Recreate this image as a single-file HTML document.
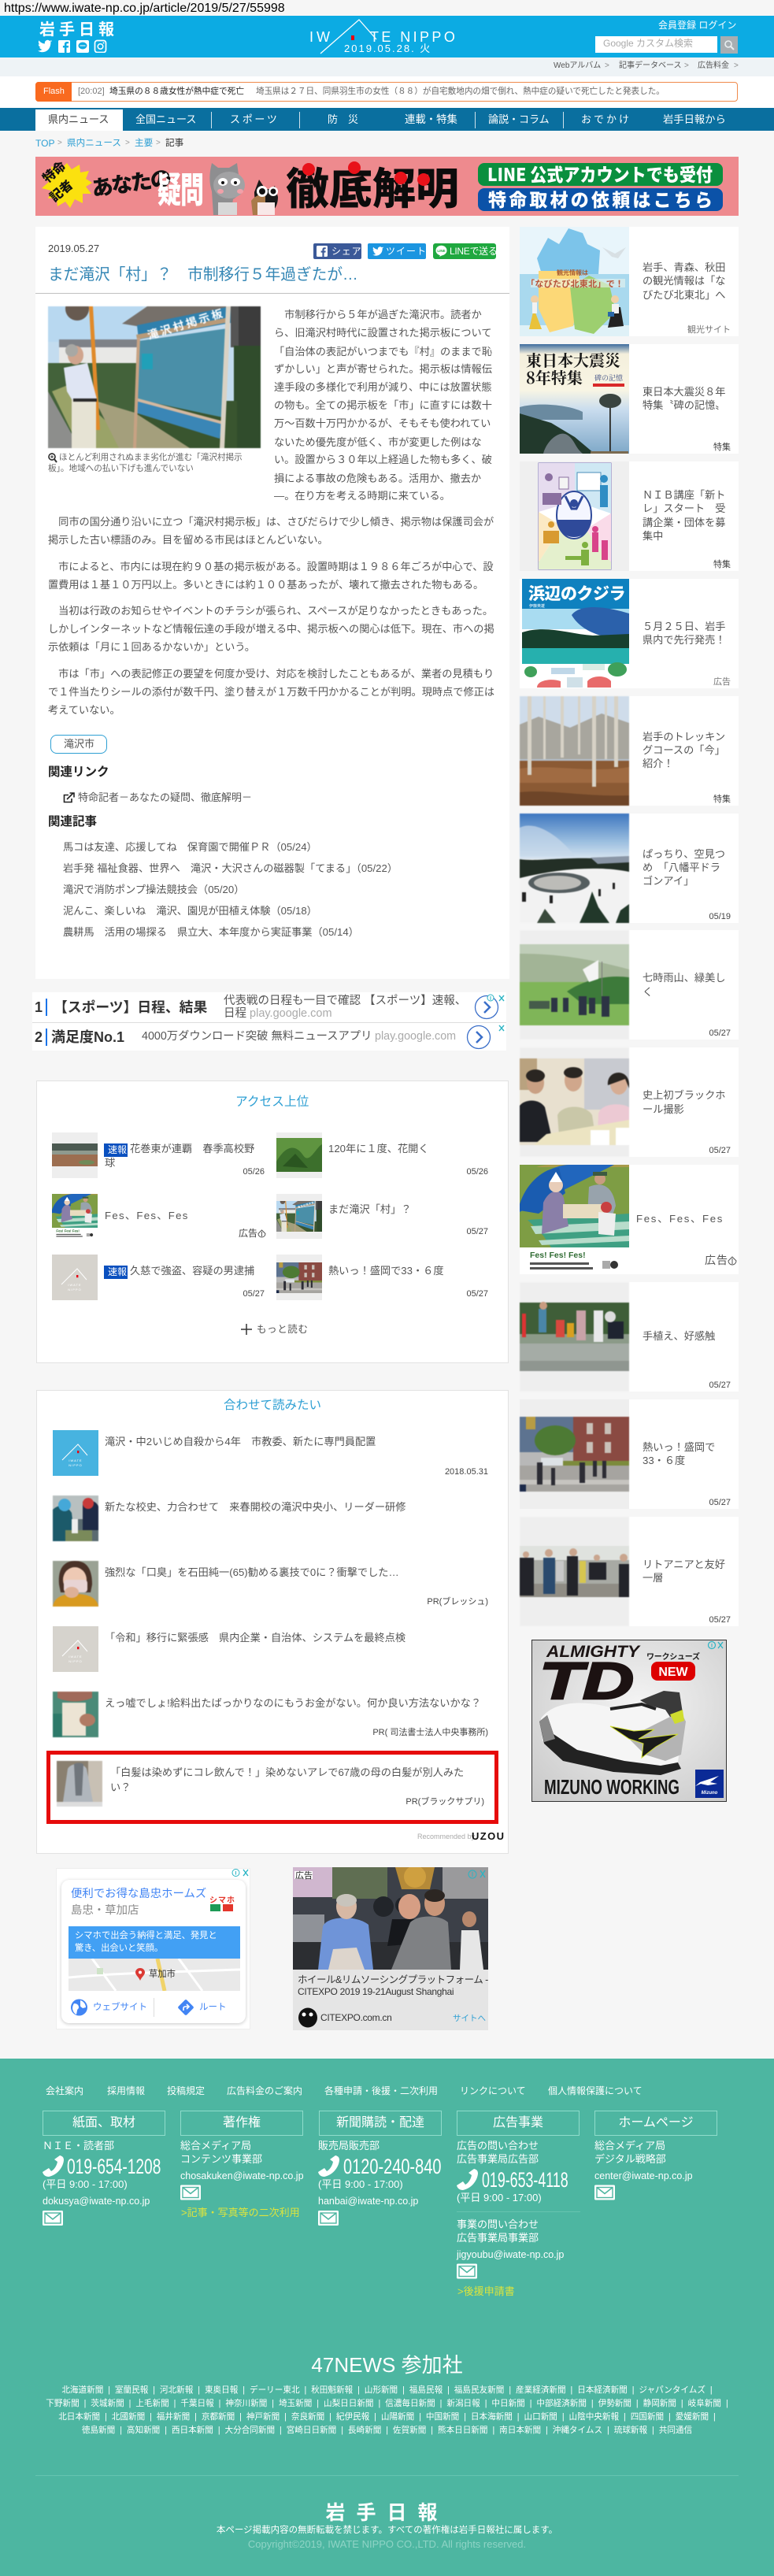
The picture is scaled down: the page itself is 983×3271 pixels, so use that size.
<!DOCTYPE html>
<html lang="ja"><head><meta charset="utf-8"><title>まだ滝沢「村」？ 市制移行5年過ぎたが… | 岩手日報</title>
<style>
html,body{margin:0;padding:0;background:#f6f6f6}
body{width:983px;height:3271px;position:relative;overflow:hidden;font-family:"Liberation Sans","Noto Sans CJK JP",sans-serif;color:#555;font-size:13.2px}
.t{position:absolute;white-space:nowrap;line-height:20px}
.b{position:absolute}
svg.a{position:absolute;display:block}
svg.p{filter:blur(.5px)}
.r{text-align:right}
.w{color:#fff}
.f{color:#fff;font-size:13px}
.e{color:#fff;font-size:12.5px}
.y{color:#dde43d;font-size:13px}
.n{color:#fff;font-size:27px;transform:scaleX(.71);transform-origin:0 50%}
.s{font-size:13.2px;letter-spacing:0;color:#555}
.d{font-size:11px;color:#444;text-align:right}
.h{position:absolute;border:1.5px solid #8fdccb;color:#fff;text-align:center;font-size:16px;line-height:30px;height:30px;box-sizing:content-box;top:2680px;width:154px}
.bx{position:absolute;left:45.5px;width:600px;background:#fff;border:1px solid #e2e2e2;box-sizing:border-box}
.it{position:absolute;left:660px;width:278px;height:139px;background:#fff}
.l{position:absolute;left:0;right:0;text-align:center;color:#fff;font-size:10.6px;word-spacing:3px;line-height:17px;white-space:nowrap}
</style></head><body>
<svg width="0" height="0" style="position:absolute">
<defs>
<symbol id="board" viewBox="0 0 270 180" preserveAspectRatio="none">
<rect width="270" height="180" fill="#c3dcef"/><rect y="0" width="120" height="45" fill="#b8d8f0"/>
<polygon points="14,50 113,50 113,75 14,75" fill="#e8e8e6"/><polygon points="14,42 113,42 113,52 14,52" fill="#7e8288"/>
<rect x="238" width="32" height="52" fill="#3c3c3c"/><rect x="232" y="0" width="10" height="52" fill="#555"/>
<rect x="0" y="72" width="118" height="90" fill="#43623a"/><rect x="236" y="50" width="34" height="130" fill="#304c2c"/>
<rect x="112" y="120" width="128" height="60" fill="#39552f"/>
<polygon points="0,108 40,180 0,180" fill="#8d8e8c"/><polygon points="5,108 25,100 110,180 40,180" fill="#9aa368"/>
<polygon points="60,120 110,135 180,180 90,180" fill="#a49f7c"/>
<polygon points="94,22 126,0 232,0 118,26" fill="#76706a"/>
<polygon points="113,24 232,0 232,21 115,42" fill="#2f80ad"/>
<polygon points="115,44 228,28 222,141 113,118" fill="#4a8fa8"/>
<rect x="119" y="60" width="14" height="20" fill="#21a0b8"/>
<polygon points="112,118 222,148 218,168 111,135" fill="#3a86b6"/>
<polygon points="112,36 230,14 230,20 113,42" fill="#b89a78"/><polygon points="111,116 222,146 222,150 111,120" fill="#d3b8a0"/>
<polygon points="226,0 232,0 224,180 218,180" fill="#d9d2c4"/><polygon points="113,40 117,40 112,180 108,180" fill="#c7a283"/>
<polygon points="52,0 57,0 66,157 61,157" fill="#e08a2a"/><circle cx="37" cy="3" r="15" fill="#675a50"/>
<rect x="30" y="118" width="31" height="62" fill="#e6e3d4"/><polygon points="20,78 50,72 62,118 30,118 24,108" fill="#dfe5f3"/><rect x="32" y="117" width="30" height="4" fill="#2a2a2a"/>
<ellipse cx="35" cy="62" rx="10" ry="12" fill="#d0a58e"/><ellipse cx="30" cy="56" rx="8" ry="8" fill="#a8a8a4"/>
<text x="0" y="0" transform="translate(128 42) rotate(-17)" font-size="14" font-weight="700" fill="#fff" letter-spacing="3">滝沢村掲示板</text>
</symbol>
<symbol id="fes" viewBox="0 0 139 139" preserveAspectRatio="none">
<rect width="139" height="139" fill="#fff"/><rect width="139" height="105" fill="#7e9d44"/><rect y="0" width="139" height="3" fill="#a89a4a"/>
<path d="M0 52C10 18 40 0 64 0L120 0L0 60z" fill="#2166bd"/><path d="M0 20C8 8 20 0 40 0H0z" fill="#7e9d44"/><path d="M0 58L24 62L58 36L50 4C30 4 8 24 0 50z" fill="#1a5cb0"/>
<polygon points="10,70 139,62 139,105 40,105 30,90" fill="#3fa083"/><polygon points="14,78 139,72 139,82 20,88" fill="#b8dccb"/><polygon points="24,96 139,90 139,97 28,102" fill="#b8dccb"/>
<path d="M30 48c8-18 22-18 26-6l6 36-34 10z" fill="#8a7fa8"/><circle cx="46" cy="26" r="9" fill="#e8cdb8"/><path d="M38 22l8-13 8 13z" fill="#fff"/>
<path d="M88 28c14-6 30-4 34 24l-6 18-30-6z" fill="#98a3ac"/><circle cx="102" cy="18" r="7" fill="#c89c80"/><rect x="93" y="9" width="18" height="5" fill="#3c5a40"/>
<rect x="55" y="50" width="55" height="18" fill="#e8dcc0"/><circle cx="110" cy="54" r="7" fill="#c84040"/><path d="M100 60l22 2-2 28-20-2z" fill="#eee"/>
<rect y="105" width="139" height="34" fill="#fff"/>
<text x="13" y="118" font-size="10.5" font-weight="700" fill="#2f6b32" font-family="Liberation Sans">Fes! Fes! Fes!</text>
<rect x="13" y="124" width="75" height="3" fill="#555"/><rect x="13" y="130" width="80" height="3" fill="#555"/><circle cx="120" cy="127" r="5" fill="#333"/><rect x="105" y="122" width="10" height="10" fill="#aaa"/>
</symbol>
<symbol id="street" viewBox="0 0 139 95" preserveAspectRatio="none">
<rect width="139" height="95" fill="#b8b8b8"/><rect width="70" height="45" fill="#5d7390"/>
<rect x="68" width="71" height="60" fill="#8a4a42"/><g fill="#c9c0b8"><rect x="85" y="8" width="8" height="14"/><rect x="108" y="8" width="8" height="14"/><rect x="85" y="32" width="8" height="14"/><rect x="108" y="32" width="8" height="14"/></g>
<ellipse cx="45" cy="30" rx="26" ry="19" fill="#4d7a34"/><rect x="8" width="12" height="16" fill="#b89c44"/>
<rect x="52" y="56" width="87" height="10" fill="#7c8b3c"/><rect x="27" y="52" width="28" height="16" fill="#dde2e6"/>
<rect y="62" width="139" height="33" fill="#a6a4a0"/><rect x="0" y="80" width="139" height="6" fill="#c6c4c0"/>
<g fill="#2c2c34"><rect x="22" y="58" width="7" height="28"/><rect x="76" y="58" width="7" height="26"/><rect x="93" y="56" width="5" height="20"/><rect x="105" y="56" width="5" height="22"/><rect x="40" y="65" width="5" height="22"/></g><rect y="86" width="8" height="9" fill="#1c2a4a"/>
</symbol>
<symbol id="logo" viewBox="0 0 58 58">
<path d="M12 38L32 18L44 32" fill="none" stroke="#fff" stroke-width="1"/><rect x="31" y="26" width="2.4" height="3.2" fill="#e60012"/>
<text x="29" y="40" text-anchor="middle" font-size="4" fill="#fff" font-family="Liberation Sans" letter-spacing="1">IWATE</text><text x="29" y="46" text-anchor="middle" font-size="4" fill="#fff" font-family="Liberation Sans" letter-spacing="1">NIPPO</text>
</symbol>
</defs></svg>

<!-- url -->
<div class="t" style="left:5px;top:1px;font-size:16px;color:#000">https://www.iwate-np.co.jp/article/2019/5/27/55998</div>

<!-- header -->
<div class="b" style="left:0;top:20px;width:983px;height:53px;background:#0cabe3"></div>
<div class="t w" style="left:50px;top:26px;font-size:20px;font-weight:700;letter-spacing:5px;line-height:24px">岩手日報</div>
<svg class="a" style="left:47px;top:50px" width="90" height="17" viewBox="0 0 90 17">
<path d="M18 2.4c-.7.3-1.4.5-2.1.6.8-.5 1.3-1.2 1.6-2-.7.4-1.5.7-2.3.9A3.7 3.7 0 0 0 8.900 5.200C5.900 5 3.200 3.600 1.400 1.300c-1 1.700-.5 3.800 1.100 4.900-.6 0-1.200-.2-1.700-.4 0 1.800 1.300 3.300 3 3.700-.5.1-1.100.2-1.700.1.500 1.500 1.900 2.500 3.500 2.600-1.600 1.200-3.500 1.800-5.500 1.600 6 3.800 16.500 1.200 16.300-10.800.7-.5 1.200-1 1.600-1.600z" fill="#fff" transform="translate(1 0) scale(1 1.05)"/>
<rect x="27" y="1" width="15" height="16" rx="1.5" fill="#fff"/><path d="M37.500 17V10.500h2.300l.3-2.500h-2.600V6.400c0-.8.3-1.200 1.200-1.200h1.400V3h-2c-2.200 0-3.200 1.300-3.200 3.200V8h-2v2.500h2V17z" fill="#0cabe3"/>
<rect x="50" y="1" width="16" height="16" rx="2" fill="#fff"/><ellipse cx="58" cy="8" rx="5.5" ry="4.5" fill="#0cabe3"/><path d="M54.500 8h7" stroke="#fff" stroke-width="1"/>
<rect x="73.500" y="1.500" width="14" height="15" rx="3" fill="none" stroke="#fff" stroke-width="1.700"/><circle cx="80.500" cy="9" r="3.300" fill="none" stroke="#fff" stroke-width="1.500"/><circle cx="84.500" cy="4.500" r="1" fill="#fff"/>
</svg>
<svg class="a" style="left:390px;top:23px" width="205" height="48" viewBox="0 0 205 48">
<path d="M17 45L66 2L88 27" fill="none" stroke="#fff" stroke-width="1.300"/><rect x="56" y="22" width="4" height="6" fill="#e60012"/>
</svg>
<div class="t w" style="left:393px;top:37px;font-size:18px;letter-spacing:4px">IW</div>
<div class="t w" style="left:470px;top:37px;font-size:18px;letter-spacing:3.400px">TE NIPPO</div>
<div class="t w" style="left:437px;top:52px;font-size:13px;letter-spacing:2px">2019.05.28. 火</div>
<div class="t w" style="left:836px;top:22px;font-size:12px">会員登録 ログイン</div>
<div class="b" style="left:756px;top:46px;width:155px;height:21px;background:#fff"></div>
<div class="t" style="left:766px;top:45px;font-size:12px;color:#aaa">Google カスタム検索</div>
<div class="b" style="left:915px;top:46px;width:22px;height:22px;background:#a7aeb2"></div>
<svg class="a" style="left:919px;top:50px" width="14" height="14" viewBox="0 0 14 14"><circle cx="6" cy="6" r="4" fill="none" stroke="#e8eef0" stroke-width="1.600"/><path d="M9 9l4 4" stroke="#e8eef0" stroke-width="2"/></svg>

<!-- subnav -->
<div class="b" style="left:0;top:73px;width:983px;height:24px;background:#eef3f6"></div>
<div class="t" style="left:703px;top:74px;font-size:10px;color:#555">Webアルバム</div>
<div class="t" style="left:768px;top:74px;font-size:10px;color:#888">&gt;</div>
<div class="t" style="left:786px;top:74px;font-size:10px;color:#555">記事データベース</div>
<div class="t" style="left:869px;top:74px;font-size:10px;color:#888">&gt;</div>
<div class="t" style="left:886px;top:74px;font-size:10px;color:#555">広告料金</div>
<div class="t" style="left:932px;top:74px;font-size:10px;color:#888">&gt;</div>

<!-- flash -->
<div class="b" style="left:0;top:97px;width:983px;height:40px;background:#fff"></div>
<div class="b" style="left:45px;top:104px;width:892px;height:25px;border:1px solid #f08a4b;border-radius:4px;box-sizing:border-box;background:#fff"></div>
<div class="b" style="left:45px;top:104px;width:46px;height:25px;background:#f96a1f;border-radius:4px 0 0 4px"></div>
<div class="t w" style="left:55px;top:106px;font-size:11px">Flash</div>
<div class="t" style="left:99px;top:106px;font-size:11px;color:#777">[20:02]</div>
<div class="t" style="left:139px;top:106px;font-size:10.700px;color:#222">埼玉県の８８歳女性が熱中症で死亡</div>
<div class="t" style="left:325px;top:106px;font-size:10.600px;color:#666">埼玉県は２７日、同県羽生市の女性（８８）が自宅敷地内の畑で倒れ、熱中症の疑いで死亡したと発表した。</div>

<!-- nav -->
<div class="b" style="left:0;top:137px;width:983px;height:29px;background:#0a6f9f"></div>
<div class="b" style="left:45px;top:139px;width:111px;height:27px;background:#fff"></div>
<div class="b" style="left:268px;top:142px;width:1px;height:21px;background:#cfe2ec"></div>
<div class="b" style="left:380px;top:142px;width:1px;height:21px;background:#cfe2ec"></div>
<div class="b" style="left:603px;top:142px;width:1px;height:21px;background:#cfe2ec"></div>
<div class="b" style="left:715px;top:142px;width:1px;height:21px;background:#cfe2ec"></div>
<div class="t" style="left:61px;top:142px;font-size:13px;color:#444">県内ニュース</div>
<div class="t w" style="left:172px;top:142px;font-size:13px">全国ニュース</div>
<div class="t w" style="left:292px;top:142px;font-size:13px;letter-spacing:2.700px">スポーツ</div>
<div class="t w" style="left:416px;top:142px;font-size:13px">防　災</div>
<div class="t w" style="left:514px;top:142px;font-size:13.400px">連載・特集</div>
<div class="t w" style="left:620px;top:142px;font-size:13px">論説・コラム</div>
<div class="t w" style="left:738px;top:142px;font-size:13px;letter-spacing:3px">おでかけ</div>
<div class="t w" style="left:842px;top:142px;font-size:13.300px">岩手日報から</div>

<!-- breadcrumb -->
<div class="t" style="left:45px;top:172px;font-size:12px;color:#2d9fd3">TOP</div>
<div class="t" style="left:73px;top:172px;font-size:10px;color:#999">&gt;</div>
<div class="t" style="left:85px;top:172px;font-size:11.600px;color:#2d9fd3">県内ニュース</div>
<div class="t" style="left:159px;top:172px;font-size:10px;color:#999">&gt;</div>
<div class="t" style="left:171px;top:172px;font-size:11.600px;color:#2d9fd3">主要</div>
<div class="t" style="left:198px;top:172px;font-size:10px;color:#999">&gt;</div>
<div class="t" style="left:210px;top:172px;font-size:11.600px;color:#333">記事</div>

<!-- banner -->
<svg class="a" style="left:45px;top:199px" width="893" height="75" viewBox="0 0 893 75" font-family="'Noto Sans CJK JP',sans-serif">
<rect width="893" height="75" fill="#ee8a8e"/>
<polygon points="40,8 46,16 56,10 57,20 68,18 64,28 72,33 64,38 71,47 60,47 60,59 50,54 44,65 38,57 28,63 27,52 16,53 20,43 8,40 17,32 9,24 21,23 20,12 31,17" fill="#fbe10f"/>
<g font-weight="900" fill="#111"><text transform="translate(15 34) rotate(-40)" font-size="16">特命</text><text transform="translate(24 58) rotate(-40)" font-size="16">記者</text>
<text transform="translate(73 50) rotate(-8)" font-size="27" letter-spacing="-2">あなたの</text></g>
<text transform="translate(155 58) scale(1 1.5)" font-size="30" font-weight="900" fill="#fff" letter-spacing="-1">疑問</text>
<path d="M224 8l8 6h14l10-6 3 22c4 10 0 20-8 24l-3 20h-22l-2-30c-4-12-3-24 0-36z" fill="#8e8e90"/><ellipse cx="246" cy="36" rx="20" ry="17" fill="#a2a2a4"/><ellipse cx="238" cy="32" rx="6" ry="5" fill="#fff"/><ellipse cx="254" cy="32" rx="6" ry="5" fill="#fff"/><circle cx="238" cy="33" r="2" fill="#111"/><circle cx="254" cy="33" r="2" fill="#111"/><ellipse cx="235" cy="44" rx="4" ry="3" fill="#f2a0a8"/><ellipse cx="260" cy="44" rx="4" ry="3" fill="#f2a0a8"/><rect x="232" y="58" width="24" height="16" fill="#d8d8d8"/>
<path d="M278 45l6-16 8 12h6l6-4 4 14c0 12-6 20-14 22h-6c-6-4-10-16-10-28z" fill="#1a1a1a"/><path d="M274 56c4-6 14-10 18-10v14l-10 14h-6z" fill="#a97a4a"/><circle cx="288" cy="44" r="7" fill="#fff"/><circle cx="302" cy="44" r="6" fill="#fff"/><circle cx="288" cy="44" r="4" fill="#111"/><circle cx="302" cy="44" r="3.5" fill="#111"/><rect x="282" y="58" width="22" height="16" fill="#f8e8e8"/>
<text x="318" y="60" font-size="55" font-weight="900" fill="#0c0c0c">徹底解明</text>
<g fill="#e8121a"><circle cx="347" cy="16" r="8"/><circle cx="405" cy="14" r="8"/><circle cx="464" cy="27" r="8"/><circle cx="493" cy="29" r="8"/></g>
<rect x="562" y="8" width="311" height="29" rx="8" fill="#0a8f3e"/><rect x="562" y="40" width="311" height="29" rx="8" fill="#0b52a8"/>
<text x="574" y="31" font-size="23" font-weight="900" fill="#fff" textLength="286" lengthAdjust="spacingAndGlyphs">LINE 公式アカウントでも受付</text>
<text x="575" y="63" font-size="23" font-weight="900" fill="#fff" textLength="285">特命取材の依頼はこちら</text>
</svg>

<!-- article -->
<div class="b" style="left:45px;top:288px;width:602px;height:955px;background:#fff"></div>
<div class="t" style="left:61px;top:306px;font-size:13px;color:#444">2019.05.27</div>
<div class="b" style="left:398px;top:309px;width:61px;height:20px;background:#3b5998;border-radius:2px"></div>
<svg class="a" style="left:402px;top:312px" width="14" height="14" viewBox="0 0 14 14"><rect width="14" height="14" rx="1.5" fill="#fff"/><path d="M9.600 14V8.600h1.800l.3-2.100H9.600V5.200c0-.6.2-1 1-1h1.100V2.300c-.2 0-.9-.1-1.600-.1-1.600 0-2.700 1-2.700 2.800v1.500H5.600v2.100h1.800V14z" fill="#3b5998"/></svg>
<div class="t w" style="left:421px;top:309px;font-size:12px;letter-spacing:.8px">シェア</div>
<div class="b" style="left:467px;top:309px;width:74px;height:20px;background:#1b95e0;border-radius:2px"></div>
<svg class="a" style="left:473px;top:313px" width="14" height="12" viewBox="0 0 18 15"><path d="M18 1.800c-.7.3-1.400.5-2.100.6.800-.5 1.300-1.200 1.600-2-.7.400-1.500.7-2.300.9A3.700 3.700 0 0 0 8.900 4.600C5.900 4.400 3.200 3 1.400.7c-1 1.700-.5 3.800 1.100 4.900-.6 0-1.200-.2-1.700-.4 0 1.800 1.300 3.300 3 3.700-.5.100-1.100.2-1.700.1.500 1.500 1.900 2.500 3.500 2.600-1.600 1.200-3.500 1.800-5.500 1.600 6 3.800 16.500 1.200 16.300-10.800.7-.5 1.200-1 1.600-1.600z" fill="#fff"/></svg>
<div class="t w" style="left:490px;top:309px;font-size:12px;letter-spacing:1px">ツイート</div>
<div class="b" style="left:550px;top:309px;width:80px;height:20px;background:#1fa83f;border-radius:3px"></div>
<svg class="a" style="left:553px;top:311px" width="15" height="15" viewBox="0 0 15 15"><ellipse cx="7.5" cy="7" rx="7" ry="6.3" fill="#fff"/><path d="M6 13l-1 2 4-2z" fill="#fff"/><text x="7.5" y="9" text-anchor="middle" font-size="4.5" font-weight="700" fill="#1fa83f" font-family="Liberation Sans">LINE</text></svg>
<div class="t w" style="left:571px;top:309px;font-size:12px;letter-spacing:-.3px">LINEで送る</div>
<div class="t" style="left:61px;top:339px;font-size:19.700px;color:#3587b5">まだ滝沢「村」？　市制移行５年過ぎたが…</div>
<div class="b" style="left:45px;top:372px;width:602px;height:1px;background:#c0c0c0"></div>

<svg class="a p" style="left:61px;top:389px" width="270" height="180"><use href="#board" width="270" height="180"/></svg>
<svg class="a" style="left:61px;top:574px" width="12" height="14" viewBox="0 0 12 14"><circle cx="5" cy="6" r="4" fill="none" stroke="#333" stroke-width="1.7"/><path d="M8 9l3 4" stroke="#333" stroke-width="2"/><path d="M3 6h4M5 4v4" stroke="#333"/></svg>
<div class="t" style="left:75px;top:571px;font-size:10.600px;color:#666">ほとんど利用されぬまま劣化が進む「滝沢村掲示</div>
<div class="t" style="left:61px;top:585px;font-size:10.600px;color:#666">板」。地域への払い下げも進んでいない</div>

<div class="t s" style="left:348px;top:390px">　市制移行から５年が過ぎた滝沢市。読者か</div>
<div class="t s" style="left:348px;top:413px">ら、旧滝沢村時代に設置された掲示板について</div>
<div class="t s" style="left:348px;top:437px">「自治体の表記がいつまでも『村』のままで恥</div>
<div class="t s" style="left:348px;top:459px">ずかしい」と声が寄せられた。掲示板は情報伝</div>
<div class="t s" style="left:348px;top:482px">達手段の多様化で利用が減り、中には放置状態</div>
<div class="t s" style="left:348px;top:505px">の物も。全ての掲示板を「市」に直すには数十</div>
<div class="t s" style="left:348px;top:528px">万～百数十万円かかるが、そもそも使われてい</div>
<div class="t s" style="left:348px;top:552px">ないため優先度が低く、市が変更した例はな</div>
<div class="t s" style="left:348px;top:574px">い。設置から３０年以上経過した物も多く、破</div>
<div class="t s" style="left:348px;top:598px">損による事故の危険もある。活用か、撤去か</div>
<div class="t s" style="left:348px;top:620px">―。在り方を考える時期に来ている。</div>

<div class="t s" style="left:61px;top:653px">　同市の国分通り沿いに立つ「滝沢村掲示板」は、さびだらけで少し傾き、掲示物は保護司会が</div>
<div class="t s" style="left:61px;top:676px">掲示した古い標語のみ。目を留める市民はほとんどいない。</div>
<div class="t s" style="left:61px;top:710px">　市によると、市内には現在約９０基の掲示板がある。設置時期は１９８６年ごろが中心で、設</div>
<div class="t s" style="left:61px;top:733px">置費用は１基１０万円以上。多いときには約１００基あったが、壊れて撤去された物もある。</div>
<div class="t s" style="left:61px;top:766px">　当初は行政のお知らせやイベントのチラシが張られ、スペースが足りなかったときもあった。</div>
<div class="t s" style="left:61px;top:789px">しかしインターネットなど情報伝達の手段が増える中、掲示板への関心は低下。現在、市への掲</div>
<div class="t s" style="left:61px;top:812px">示依頼は「月に１回あるかないか」という。</div>
<div class="t s" style="left:61px;top:846px">　市は「市」への表記修正の要望を何度か受け、対応を検討したこともあるが、業者の見積もり</div>
<div class="t s" style="left:61px;top:869px">で１件当たりシールの添付が数千円、塗り替えが１万数千円かかることが判明。現時点で修正は</div>
<div class="t s" style="left:61px;top:892px">考えていない。</div>

<div class="b" style="left:64px;top:933px;width:72px;height:24px;border:1px solid #2d9fd3;border-radius:8px;box-sizing:border-box;background:#fff"></div>
<div class="t" style="left:81px;top:935px;font-size:13px;color:#555">滝沢市</div>
<div class="t" style="left:61px;top:971px;font-size:15.500px;font-weight:700;color:#222">関連リンク</div>
<svg class="a" style="left:80px;top:1006px" width="15" height="14" viewBox="0 0 15 14"><path d="M11 8v4.500H1.500V3.500H7" fill="none" stroke="#222" stroke-width="1.6"/><path d="M5 9L13 1M8.500 1H14V6.500" fill="none" stroke="#222" stroke-width="1.6"/></svg>
<div class="t" style="left:99px;top:1003px;font-size:13px">特命記者－あなたの疑問、徹底解明－</div>
<div class="t" style="left:61px;top:1034px;font-size:15.500px;font-weight:700;color:#222">関連記事</div>
<div class="t s" style="left:80px;top:1066px">馬コは友達、応援してね　保育園で開催ＰＲ（05/24）</div>
<div class="t s" style="left:80px;top:1093px">岩手発 福祉食器、世界へ　滝沢・大沢さんの磁器製「てまる」（05/22）</div>
<div class="t s" style="left:80px;top:1120px">滝沢で消防ポンプ操法競技会（05/20）</div>
<div class="t s" style="left:80px;top:1147px">泥んこ、楽しいね　滝沢、園児が田植え体験（05/18）</div>
<div class="t s" style="left:80px;top:1174px">農耕馬　活用の場探る　県立大、本年度から実証事業（05/14）</div>

<!-- text ads -->
<div class="b" style="left:41px;top:1260px;width:602px;height:74px;background:#fff"></div>
<div class="b" style="left:41px;top:1298px;width:602px;height:1px;background:#ddd"></div>
<div class="t" style="left:44px;top:1269px;font-size:18px;font-weight:700;color:#333">1</div>
<div class="b" style="left:58px;top:1268px;width:2px;height:22px;background:#1a73e8"></div>
<div class="t" style="left:68px;top:1269px;font-size:17.800px;font-weight:700;color:#333">【スポーツ】日程、結果</div>
<div class="t" style="left:284px;top:1261px;font-size:14.500px;color:#555">代表戦の日程も一目で確認 【スポーツ】速報、</div>
<div class="t" style="left:284px;top:1277px;font-size:14.500px;color:#555">日程 <span style="color:#aaa">play.google.com</span></div>
<svg class="a" style="left:600px;top:1262px" width="44" height="36" viewBox="0 0 44 36"><circle cx="18" cy="17" r="14.5" fill="none" stroke="#3b6fc9" stroke-width="1.3"/><path d="M15 10l7 7-7 7" fill="none" stroke="#3b6fc9" stroke-width="2.5"/><circle cx="23" cy="5" r="4" fill="#fff" stroke="#2ab4c4"/><path d="M23 3v5" stroke="#2ab4c4"/><path d="M34 2l6 7M40 2l-6 7" stroke="#2ab4c4" stroke-width="1.4"/></svg>
<div class="t" style="left:44px;top:1307px;font-size:18px;font-weight:700;color:#333">2</div>
<div class="b" style="left:58px;top:1306px;width:2px;height:22px;background:#1a73e8"></div>
<div class="t" style="left:65px;top:1307px;font-size:18px;font-weight:700;color:#333">満足度No.1</div>
<div class="t" style="left:180px;top:1306px;font-size:14.300px;color:#555">4000万ダウンロード突破 無料ニュースアプリ</div>
<div class="t" style="left:476px;top:1306px;font-size:14.300px;color:#aaa">play.google.com</div>
<svg class="a" style="left:592px;top:1300px" width="52" height="34" viewBox="0 0 52 34"><circle cx="16" cy="17" r="14.5" fill="none" stroke="#3b6fc9" stroke-width="1.3"/><path d="M13 10l7 7-7 7" fill="none" stroke="#3b6fc9" stroke-width="2.5"/><path d="M42 2l6 7M48 2l-6 7" stroke="#2ab4c4" stroke-width="1.4"/></svg>

<!-- access -->
<div class="bx" style="top:1372px;height:359px"></div>
<div class="t" style="left:299px;top:1390px;font-size:15.700px;color:#2d9fd3">アクセス上位</div>

<div class="b" style="left:66px;top:1438px;width:58px;height:58px;background:#eee"></div>
<svg class="a" style="left:66px;top:1452px" width="58" height="29" viewBox="0 0 58 29"><rect width="58" height="29" fill="#9c6e50"/><rect width="58" height="11" fill="#4c5a52"/><rect y="9" width="58" height="5" fill="#8f9a8e"/><ellipse cx="44" cy="24" rx="10" ry="3" fill="#6f8a58"/></svg>
<div class="b" style="left:132px;top:1452px;width:30px;height:17px;background:#0a50bf"></div>
<div class="t w" style="left:137px;top:1450px;font-size:12px">速報</div>
<div class="t s" style="left:165px;top:1449px">花巻東が連覇　春季高校野</div>
<div class="t s" style="left:133px;top:1467px">球</div>
<div class="t d" style="left:280px;width:56px;top:1478px">05/26</div>
<div class="b" style="left:351px;top:1438px;width:58px;height:58px;background:#eee"></div>
<svg class="a" style="left:351px;top:1445px" width="58" height="43" viewBox="0 0 58 43"><rect width="58" height="43" fill="#3c6f2c"/><path d="M0 30C14 6 26 10 34 22S50 12 58 8V0H0z" fill="#5f9440"/><path d="M8 36L24 20 40 38z" fill="#2a5520"/></svg>
<div class="t s" style="left:417px;top:1449px">120年に１度、花開く</div>
<div class="t d" style="left:564px;width:56px;top:1478px">05/26</div>

<svg class="a" style="left:66px;top:1516px" width="58" height="57"><use href="#fes" width="58" height="57"/></svg>
<div class="t s" style="left:133px;top:1534px;letter-spacing:1.3px">Fes、Fes、Fes</div>
<div class="t" style="left:303px;top:1556px;font-size:12px;color:#444">広告</div>
<svg class="a" style="left:327px;top:1561px" width="11" height="11" viewBox="0 0 11 11"><path d="M5.500 1L10 5.500C10 8 8 10 5.500 10S1 8 1 5.500z" fill="none" stroke="#555"/><path d="M5.500 3v6" stroke="#555"/></svg>
<div class="b" style="left:351px;top:1516px;width:58px;height:57px;background:#eee"></div>
<svg class="a" style="left:351px;top:1525px" width="58" height="39"><use href="#board" width="58" height="39"/></svg>
<div class="t s" style="left:417px;top:1526px">まだ滝沢「村」？</div>
<div class="t d" style="left:564px;width:56px;top:1554px">05/27</div>

<div class="b" style="left:66px;top:1593px;width:58px;height:58px;background:#d6d3cd"></div>
<svg class="a" style="left:66px;top:1593px" width="58" height="58"><use href="#logo" width="58" height="58"/></svg>
<div class="b" style="left:132px;top:1607px;width:30px;height:17px;background:#0a50bf"></div>
<div class="t w" style="left:137px;top:1605px;font-size:12px">速報</div>
<div class="t s" style="left:165px;top:1604px">久慈で強盗、容疑の男逮捕</div>
<div class="t d" style="left:280px;width:56px;top:1633px">05/27</div>
<div class="b" style="left:351px;top:1593px;width:58px;height:58px;background:#eee"></div>
<svg class="a" style="left:351px;top:1603px" width="58" height="39"><use href="#street" width="58" height="39"/></svg>
<div class="t s" style="left:417px;top:1604px">熱いっ！盛岡で33・６度</div>
<div class="t d" style="left:564px;width:56px;top:1633px">05/27</div>
<svg class="a" style="left:306px;top:1681px" width="14" height="14"><path d="M7 0v14M0 7h14" stroke="#333" stroke-width="1.5"/></svg>
<div class="t" style="left:326px;top:1678px;font-size:12.500px;letter-spacing:.6px">もっと読む</div>

<!-- recommended -->
<div class="bx" style="top:1765px;height:589px"></div>
<div class="t" style="left:284px;top:1775px;font-size:15.500px;color:#2d9fd3">合わせて読みたい</div>

<div class="b" style="left:67px;top:1816px;width:58px;height:58px;background:#47b3e0"></div>
<svg class="a" style="left:67px;top:1816px" width="58" height="58"><use href="#logo" width="58" height="58"/></svg>
<div class="t s" style="left:133px;top:1821px">滝沢・中2いじめ自殺から4年　市教委、新たに専門員配置</div>
<div class="t d" style="left:520px;width:100px;top:1859px">2018.05.31</div>

<svg class="a p" style="left:67px;top:1899px" width="58" height="58" viewBox="0 0 58 58"><rect width="58" height="58" fill="#5a6a70"/><rect width="58" height="30" fill="#b8c0c0"/><path d="M0 18c8-8 18-6 24 4l4 36H0z" fill="#1c5a6a"/><path d="M38 8c10-4 18 0 20 6v30H38z" fill="#1e2a46"/><circle cx="15" cy="12" r="8" fill="#45a8d8"/><circle cx="45" cy="10" r="7" fill="#c83a3a"/><rect x="16" y="44" width="34" height="14" fill="#7a8a5a"/><rect x="24" y="30" width="8" height="18" fill="#eee"/></svg>
<div class="t s" style="left:133px;top:1904px">新たな校史、力合わせて　来春開校の滝沢中央小、リーダー研修</div>

<svg class="a p" style="left:67px;top:1982px" width="58" height="58" viewBox="0 0 58 58"><rect width="58" height="58" fill="#9aa294"/><path d="M8 30C6 8 16 0 28 0s22 6 22 30l-2 10H10z" fill="#4a3228"/><ellipse cx="28" cy="24" rx="15" ry="16" fill="#eec9b4"/><rect x="14" y="24" width="30" height="16" rx="4" fill="#e8d4d4"/><path d="M0 58c2-12 12-16 28-16s28 4 30 16z" fill="#d89a20"/><ellipse cx="24" cy="40" rx="9" ry="7" fill="#ddb096"/></svg>
<div class="t s" style="left:133px;top:1987px">強烈な「口臭」を石田純一(65)勧める裏技で0に？衝撃でした…</div>
<div class="t d" style="left:480px;width:140px;top:2024px">PR(ブレッシュ)</div>

<div class="b" style="left:67px;top:2065px;width:58px;height:58px;background:#d6d3cd"></div>
<svg class="a" style="left:67px;top:2065px" width="58" height="58"><use href="#logo" width="58" height="58"/></svg>
<div class="t s" style="left:133px;top:2070px">「令和」移行に緊張感　県内企業・自治体、システムを最終点検</div>

<svg class="a p" style="left:67px;top:2148px" width="58" height="58" viewBox="0 0 58 58"><rect width="58" height="58" fill="#4a8a78"/><path d="M6 0h44v8C36 14 20 14 6 8z" fill="#a06a5a"/><rect x="12" y="14" width="30" height="42" fill="#ece4d4"/><rect x="0" y="28" width="12" height="30" fill="#2e7a6a"/><ellipse cx="44" cy="36" rx="10" ry="8" fill="#b07a64"/></svg>
<div class="t s" style="left:133px;top:2153px">えっ嘘でしょ!給料出たばっかりなのにもうお金がない。何か良い方法ないかな？</div>
<div class="t d" style="left:420px;width:200px;top:2190px">PR( 司法書士法人中央事務所)</div>

<div class="b" style="left:59px;top:2223px;width:574px;height:93px;border:5px solid #e60b0b;box-sizing:border-box"></div>
<svg class="a p" style="left:72px;top:2236px" width="58" height="58" viewBox="0 0 58 58"><rect width="58" height="58" fill="#8a8070"/><rect x="40" width="18" height="58" fill="#c8c0b4"/><path d="M14 10C18 2 34 2 38 10l8 42c-6 6-34 6-38 0z" fill="#b0b6bc"/><path d="M22 4c4-2 8-2 12 0l-2 40h-8z" fill="#70767c"/><rect y="52" width="58" height="6" fill="#ddd"/></svg>
<div class="t s" style="left:140px;top:2241px">「白髪は染めずにコレ飲んで！」染めないアレで67歳の母の白髪が別人みた</div>
<div class="t s" style="left:140px;top:2260px">い？</div>
<div class="t d" style="left:475px;width:140px;top:2278px">PR(ブラックサプリ)</div>
<div class="t" style="left:530px;top:2322px;font-size:9px;color:#aaa">Recommended by</div>
<div class="t" style="left:599px;top:2322px;font-size:13px;font-weight:700;color:#111;letter-spacing:1.4px">UZOU</div>

<!-- bottom ad left -->
<div class="b" style="left:71px;top:2372px;width:247px;height:205px;background:#fff;border:1px solid #eee;box-sizing:border-box"></div>
<div class="b" style="left:78px;top:2387px;width:234px;height:182px;background:#fff;border-radius:10px;box-shadow:0 1px 5px rgba(0,0,0,.22)"></div>
<div class="t" style="left:90px;top:2395px;font-size:14.400px;color:#4285f4">便利でお得な島忠ホームズ</div>
<div class="t" style="left:90px;top:2416px;font-size:14.400px;color:#8a8a8a">島忠・草加店</div>
<svg class="a" style="left:266px;top:2407px" width="33" height="20" viewBox="0 0 33 20"><text x="0" y="9" font-size="10" font-weight="700" fill="#e4362b" letter-spacing="1">シマホ</text><rect x="1" y="11" width="13" height="9" fill="#1d9a56"/><rect x="17" y="11" width="13" height="9" fill="#e4362b"/></svg>
<div class="b" style="left:87px;top:2446px;width:218px;height:41px;background:#42a0f4"></div>
<div class="t w" style="left:95px;top:2448px;font-size:11.300px">シマホで出会う納得と満足、発見と</div>
<div class="t w" style="left:95px;top:2464px;font-size:11.300px">驚き、出会いと笑顔。</div>
<svg class="a" style="left:87px;top:2487px" width="218" height="41" viewBox="0 0 218 41"><rect width="218" height="41" fill="#e9e9e9"/><path d="M0 24C40 20 90 18 218 14M30 0L60 41M140 0L170 41" stroke="#fff" stroke-width="3" fill="none"/><path d="M113 0l9 41" stroke="#f0d36a" stroke-width="5"/><rect x="36" y="12" width="8" height="8" fill="#cfe3c8"/></svg>
<svg class="a" style="left:172px;top:2499px" width="12" height="16" viewBox="0 0 12 16"><path d="M6 16C4 11 0 9 0 5.500a6 5.500 0 0 1 12 0C12 9 8 11 6 16z" fill="#db3a34"/><circle cx="6" cy="5.500" r="2" fill="#fff"/></svg>
<div class="t" style="left:189px;top:2497px;font-size:11.300px;color:#333">草加市</div>
<svg class="a" style="left:90px;top:2538px" width="21" height="22" viewBox="0 0 21 22"><circle cx="10.500" cy="11" r="10.500" fill="#4285f4"/><path d="M4 6c4 0 6 2 6 5 0 2-2 2-2 4l-1 5C3 18 0 12 4 6zM12 2c4 1 7 5 7 9l-4 1c-2-2-3-1-3-4z" fill="#fff"/></svg>
<div class="t" style="left:118px;top:2539px;font-size:11.500px;color:#4285f4">ウェブサイト</div>
<div class="b" style="left:195px;top:2537px;width:1px;height:24px;background:#ddd"></div>
<svg class="a" style="left:225px;top:2538px" width="22" height="22" viewBox="0 0 22 22"><rect x="3.500" y="3.500" width="15" height="15" rx="2" transform="rotate(45 11 11)" fill="#4285f4"/><path d="M8 15v-3c0-1 1-2 2-2h4M12 7l3 3-3 3" fill="none" stroke="#fff" stroke-width="1.6"/></svg>
<div class="t" style="left:253px;top:2539px;font-size:11.500px;color:#4285f4">ルート</div>
<svg class="a" style="left:294px;top:2372px" width="24" height="12" viewBox="0 0 24 12"><circle cx="5.500" cy="6" r="4.500" fill="none" stroke="#2ab4c4"/><path d="M5.500 4v4.500" stroke="#2ab4c4"/><path d="M15 2l6 8M21 2l-6 8" stroke="#2ab4c4" stroke-width="1.4"/></svg>

<!-- bottom ad right -->
<svg class="a" style="left:372px;top:2371px" width="248" height="207" viewBox="0 0 248 207">
<rect width="248" height="207" fill="#e5e5e5"/>
<rect width="248" height="130" fill="#3c4048"/><rect width="70" height="38" fill="#d0b7cf"/><rect x="50" y="0" width="70" height="40" fill="#5f6e52"/><rect x="190" y="0" width="58" height="40" fill="#9a9a9c"/>
<path d="M130 0h50l-6 28h-36z" fill="#b58a38"/><circle cx="155" cy="12" r="14" fill="#cfa040"/>
<g fill="#22252a"><circle cx="115" cy="50" r="13"/><circle cx="140" cy="48" r="10"/><circle cx="180" cy="48" r="11"/></g>
<rect x="0" y="60" width="40" height="50" fill="#8f9298"/>
<rect x="0" y="95" width="248" height="35" fill="#2c2e32"/>
<path d="M32 130l6-55c6-14 44-14 58-2l6 57z" fill="#6f94d8"/><ellipse cx="68" cy="50" rx="13" ry="16" fill="#d7b8a4"/><ellipse cx="68" cy="42" rx="13" ry="8" fill="#c8c4bc"/>
<path d="M45 130l6-26 30-2 10 28z" fill="#ddd5cc"/>
<path d="M120 100l6-34h36l6 30z" fill="#16181c"/><ellipse cx="148" cy="50" rx="14" ry="16" fill="#d69e84"/>
<path d="M125 130l24-60c10-10 38-10 48 0l4 60z" fill="#7f8184"/><ellipse cx="180" cy="46" rx="13" ry="16" fill="#c99679"/><ellipse cx="180" cy="36" rx="13" ry="8" fill="#2c2622"/>
<path d="M212 130l2-50 22 0 6 50z" fill="#e6e6e6"/><ellipse cx="224" cy="66" rx="9" ry="10" fill="#b8886c"/>
<ellipse cx="19" cy="191" rx="12" ry="12.5" fill="#111"/><circle cx="14" cy="187" r="2.5" fill="#fff"/><circle cx="23" cy="187" r="2.5" fill="#fff"/>
<rect x="2" y="5" width="23" height="10" fill="#fff"/><text x="3" y="14" font-size="11" fill="#222">広告</text>
<circle cx="228" cy="9" r="5" fill="none" stroke="#2ab4c4"/><path d="M228 6v6" stroke="#2ab4c4"/><path d="M238 4l6 9M244 4l-6 9" stroke="#2ab4c4" stroke-width="1.3"/>
</svg>
<div class="t" style="left:378px;top:2504px;font-size:12.500px;color:#333;letter-spacing:-.5px">ホイール&amp;リムソーシングプラットフォーム -</div>
<div class="t" style="left:378px;top:2519px;font-size:12px;color:#333;letter-spacing:-.3px">CITEXPO 2019 19-21August Shanghai</div>
<div class="t" style="left:407px;top:2552px;font-size:12px;color:#333;letter-spacing:-.3px">CITEXPO.com.cn</div>
<div class="t" style="left:575px;top:2553px;font-size:10.500px;color:#2d9fd3">サイトへ</div>

<!-- sidebar -->
<div class="it" style="top:288px"><svg class="a" style="left:0;top:0" width="139" height="139" viewBox="0 0 139 139">
<rect width="139" height="139" fill="#e8f5fb"/><rect y="60" width="139" height="79" fill="#a9d9ee"/><rect y="125" width="139" height="14" fill="#dff1f7"/>
<path d="M36 14L50 22 62 2l18 6 6 14 16 8-2 30H28l-6-20z" fill="#7cc4ea"/>
<path d="M24 56h50l4 20-10 50-30 8-14-30z" fill="#fcd877"/><path d="M64 76l24-14 26 12 8 34-28 28-24-6z" fill="#9dcf6f"/>
<rect x="14" y="66" width="120" height="11" fill="#e9f4ee" opacity=".6"/>
<text x="8" y="76" font-size="11" font-weight="700" fill="#b8553b" textLength="124">「なびたび北東北」で！</text>
<text x="47" y="61" font-size="8" font-weight="700" fill="#a85a30">観光情報は</text>
<path d="M105 26l16 8 14-8-10 14-8-2z" fill="#d8e0e4"/>
<path d="M12 130l6-26 10 26z" fill="#e9c23a"/><circle cx="19" cy="92" r="5" fill="#efd0a8"/><rect x="16" y="96" width="6" height="14" fill="#f2f2f2"/>
<path d="M112 128l6-26 10 0 4 24z" fill="#222"/><circle cx="121" cy="92" r="5" fill="#efd0a8"/><rect x="117" y="98" width="9" height="12" fill="#f2f2f2"/><rect x="112" y="108" width="8" height="6" fill="#2a68a8"/>
</svg><div class="t" style="left:156px;top:43px;font-size:13.200px;line-height:17.300px;white-space:normal;width:110px">岩手、青森、秋田<br>の観光情報は「な<br>びたび北東北」へ</div><div class="t d" style="left:168px;width:100px;top:121px;font-size:11px;color:#777">観光サイト</div></div>

<div class="it" style="top:437px"><svg class="a" style="left:0;top:0" width="139" height="139" viewBox="0 0 139 139" font-family="'Noto Serif CJK SC',serif">
<defs><linearGradient id="g2" x1="0" y1="0" x2="0" y2="1"><stop offset="0" stop-color="#3d6c9e"/><stop offset=".09" stop-color="#f4efdc"/><stop offset=".42" stop-color="#f8f5e4"/><stop offset=".6" stop-color="#c9dcee"/><stop offset="1" stop-color="#7ea8c8"/></linearGradient></defs>
<rect width="139" height="139" fill="url(#g2)"/>
<path d="M0 80c20-6 60-4 80 6v10H0z" fill="#6a8aa0"/><path d="M0 88l40 12 30 18 25 21H0z" fill="#22392c"/><path d="M30 139c4-16 20-30 30-24s10 16 20 24z" fill="#6e7a80"/>
<rect x="114" y="68" width="1.800" height="71" fill="#2c2c28"/><ellipse cx="115" cy="72" rx="14" ry="9" fill="#3a4440"/><rect x="90" y="136" width="48" height="3" fill="#7a6a50"/>
<text x="8" y="28" font-size="20" font-weight="700" fill="#181818">東日本大震災</text><text x="8" y="50" font-size="20" font-weight="700" fill="#181818">8年特集</text>
<text x="95" y="46" font-size="9" fill="#3a4a80">碑の記憶</text><rect x="93" y="50" width="40" height="4" fill="#d92a2a"/>
</svg><div class="t" style="left:156px;top:52px;font-size:13.200px;line-height:17.300px;white-space:normal;width:110px">東日本大震災８年<br>特集〝碑の記憶〟</div><div class="t d" style="left:168px;width:100px;top:121px">特集</div></div>

<div class="it" style="top:586px"><svg class="a" style="left:0;top:0" width="139" height="139" viewBox="0 0 139 139">
<rect width="139" height="139" fill="#efefef"/><rect x="24" y="2" width="92" height="135" fill="#fff" stroke="#7b72b8"/>
<polygon points="24,2 70,2 70,50 24,64" fill="#e6dcef"/><polygon points="70,2 116,2 116,66 70,50" fill="#cfe8f4"/><polygon points="24,64 54,82 24,128" fill="#fbe9c4"/><polygon points="116,66 116,128 84,86" fill="#fadbe9"/><polygon points="24,137 116,137 116,128 84,86 54,82 24,128" fill="#e4f0cd"/>
<ellipse cx="69" cy="68" rx="22" ry="30" fill="#f4f6ff" stroke="#2f4a9a" stroke-width="2"/><path d="M47 74h44c-2 14-10 22-22 22s-20-8-22-22z" fill="#2f4a9a"/><circle cx="69" cy="53" r="5" fill="#2f4a9a"/><path d="M58 44l8 16h6l8-16" fill="none" stroke="#2f4a9a" stroke-width="3"/>
<rect x="29" y="40" width="24" height="15" fill="#8a6fa0"/><circle cx="37" cy="20" r="5" fill="#8a6fa0"/><rect x="50" y="20" width="12" height="15" fill="#f4f4f4" stroke="#8a6fa0"/><rect x="73" y="14" width="30" height="23" fill="#fff" stroke="#4a8cb8"/><rect x="102" y="30" width="10" height="28" fill="#2f8dc4"/><circle cx="107" cy="22" r="5" fill="#2f8dc4"/>
<rect x="30" y="88" width="20" height="16" fill="#d89a30"/><circle cx="40" cy="80" r="4" fill="#d89a30"/><rect x="92" y="90" width="8" height="25" fill="#d8448a"/><circle cx="96" cy="86" r="4" fill="#d8448a"/><rect x="104" y="100" width="8" height="25" fill="#d8448a"/>
<rect x="58" y="120" width="22" height="5" fill="#7eb040"/><rect x="78" y="112" width="10" height="20" fill="#7eb040"/><circle cx="83" cy="106" r="4" fill="#7eb040"/>
</svg><div class="t" style="left:156px;top:34px;font-size:13.200px;line-height:17.300px;white-space:normal;width:110px">ＮＩＢ講座「新ト<br>レ」スタート　受<br>講企業・団体を募<br>集中</div><div class="t d" style="left:168px;width:100px;top:121px">特集</div></div>

<div class="it" style="top:735px"><svg class="a" style="left:0;top:0" width="139" height="139" viewBox="0 0 139 139" font-family="'Noto Sans CJK JP',sans-serif">
<rect x="3" width="136" height="139" fill="#fff"/><rect x="3" width="136" height="38" fill="#0f81bf"/><rect x="3" y="38" width="136" height="26" fill="#a9dcf1"/>
<path d="M66 46c10-14 40-12 73-2v30c-30 4-60-6-73-28z" fill="#2b61ab"/>
<path d="M3 68c30-10 60 2 90 4l46-2v20H3z" fill="#17402e"/><rect x="3" y="88" width="136" height="24" fill="#26b0ae"/><path d="M3 108h136v31H3z" fill="#fff"/>
<g><rect x="40" y="113" width="30" height="8" fill="#bfd7e8"/><rect x="80" y="108" width="28" height="8" fill="#d9ece4"/><ellipse cx="14" cy="118" rx="8" ry="7" fill="#3fa05a"/><ellipse cx="124" cy="115" rx="12" ry="9" fill="#3fa05a"/><path d="M22 138c0-10 20-12 30-8v8z" fill="#e86a6a"/><path d="M86 130c6-8 24-8 30 0v8H86z" fill="#e86a6a"/><rect x="60" y="125" width="20" height="13" fill="#cfe0e8"/></g>
<text x="11" y="26" font-size="21" font-weight="900" fill="#fff" letter-spacing="-.5">浜辺のクジラ</text><text x="12" y="36" font-size="5" fill="#fff">伊藤英雄</text>
</svg><div class="t" style="left:156px;top:52px;font-size:13.200px;line-height:17.300px;white-space:normal;width:110px">５月２５日、岩手<br>県内で先行発売！</div><div class="t d" style="left:168px;width:100px;top:121px;color:#777">広告</div></div>

<div class="it" style="top:883.600px"><svg class="a p" style="left:0;top:0" width="139" height="139" viewBox="0 0 139 139">
<rect width="139" height="139" fill="#b4c0cc"/><rect y="0" width="139" height="60" fill="#cfdcea"/>
<path d="M0 36l24-10 40 14 40-18 35 12v46H0z" fill="#a8a69e"/><rect y="82" width="139" height="57" fill="#8b5a34"/><path d="M0 92c40-6 90 6 139-2v20H0z" fill="#a06b42"/><path d="M0 122c40-4 80 6 139 4v13H0z" fill="#6e4528"/>
<g fill="#d7d2c6"><rect x="10" width="5" height="100"/><rect x="30" width="3" height="80"/><rect x="52" width="4" height="78"/><rect x="92" width="5" height="115"/><rect x="120" width="5" height="90"/><rect x="74" width="3" height="74"/><rect x="108" width="3" height="80"/></g>
</svg><div class="t" style="left:156px;top:43px;font-size:13.200px;line-height:17.300px;white-space:normal;width:110px">岩手のトレッキン<br>グコースの「今」<br>紹介！</div><div class="t d" style="left:168px;width:100px;top:121px">特集</div></div>

<div class="it" style="top:1032.500px"><svg class="a p" style="left:0;top:0" width="139" height="139" viewBox="0 0 139 139">
<defs><linearGradient id="g6" x1="0" y1="0" x2="0" y2="1"><stop offset="0" stop-color="#3e77c0"/><stop offset=".6" stop-color="#9cbfe0"/><stop offset="1" stop-color="#dfe9f2"/></linearGradient></defs>
<rect width="139" height="60" fill="url(#g6)"/><path d="M0 18c20-10 50 10 70 36H0z" fill="#c8d8ea" opacity=".7"/>
<rect y="58" width="139" height="81" fill="#f2f2f2"/><path d="M0 58c30 4 60-6 139 2v14c-40-8-90-4-139 8z" fill="#232f26"/><path d="M90 56l49-2v8l-40 2z" fill="#8a96a6"/>
<ellipse cx="50" cy="88" rx="39" ry="13" fill="#555e60"/><ellipse cx="48" cy="88" rx="30" ry="9" fill="#bcbcb8"/>
<path d="M76 139l10-22 6-18 8 20 14 20z" fill="#22382a"/><path d="M22 139l10-18 14 18z" fill="#3a4a3c"/><path d="M122 139l6-16 11-8v24z" fill="#22382a"/><g fill="#222"><rect x="3" y="100" width="5" height="12"/><rect x="38" y="104" width="4" height="10"/><rect x="100" y="96" width="3" height="9"/><rect x="118" y="88" width="3" height="8"/></g>
</svg><div class="t" style="left:156px;top:43px;font-size:13.200px;line-height:17.300px;white-space:normal;width:110px">ぱっちり、空見つ<br>め　「八幡平ドラ<br>ゴンアイ」</div><div class="t d" style="left:168px;width:100px;top:121px">05/19</div></div>

<div class="it" style="top:1181.400px"><svg class="a p" style="left:0;top:0" width="139" height="139" viewBox="0 0 139 139">
<rect width="139" height="139" fill="#eee"/><rect y="18" width="139" height="103" fill="#bfcdb8"/><path d="M0 30c40 0 80 4 139 20v30H0z" fill="#a2b496"/><path d="M0 66h139v55H0z" fill="#7fb558"/><path d="M60 78c20-14 50-22 79-18v34H80z" fill="#3d7a3a"/>
<polygon points="80,50 100,38 100,62 88,66" fill="#f4f4f4"/><rect x="104" y="40" width="1" height="60" fill="#777"/>
<g fill="#2c3444"><rect x="40" y="86" width="8" height="18"/><rect x="55" y="86" width="7" height="18"/><rect x="75" y="84" width="10" height="24"/><rect x="88" y="86" width="8" height="20"/><rect x="104" y="84" width="10" height="26"/><rect x="12" y="90" width="26" height="10" opacity=".7"/></g>
</svg><div class="t" style="left:156px;top:52px;font-size:13.200px;line-height:17.300px;white-space:normal;width:110px">七時雨山、緑美し<br>く</div><div class="t d" style="left:168px;width:100px;top:121px">05/27</div></div>

<div class="it" style="top:1330.300px"><svg class="a p" style="left:0;top:0" width="139" height="139" viewBox="0 0 139 139">
<rect width="139" height="139" fill="#eee"/><rect y="14" width="139" height="110" fill="#e8e0cf"/><rect x="82" y="14" width="57" height="65" fill="#c8cad0"/><rect y="14" width="22" height="40" fill="#b9a27f"/>
<path d="M0 120V74c6-8 24-10 32 2l10 44z" fill="#1f2126"/><ellipse cx="20" cy="45" rx="11" ry="14" fill="#c9a083"/><ellipse cx="20" cy="36" rx="12" ry="8" fill="#2a2622"/>
<path d="M48 86c6-14 36-14 44 0l4 26H50z" fill="#c9c7a8"/><ellipse cx="68" cy="42" rx="11" ry="14" fill="#d0a78c"/><ellipse cx="68" cy="32" rx="12" ry="7" fill="#2a2622"/>
<path d="M100 84c4-14 30-14 39-8v34h-40z" fill="#ecc9d3"/><ellipse cx="126" cy="46" rx="11" ry="14" fill="#d6ad94"/><path d="M112 48c-2-20 26-22 27-2v6l-5-12z" fill="#2a2622"/>
<path d="M18 124l16-14 105-18v32z" fill="#ece4c2"/><rect x="90" y="105" width="24" height="19" fill="#fff"/><rect x="122" y="102" width="17" height="22" fill="#fff"/>
</svg><div class="t" style="left:156px;top:52px;font-size:13.200px;line-height:17.300px;white-space:normal;width:110px">史上初ブラックホ<br>ール撮影</div><div class="t d" style="left:168px;width:100px;top:121px">05/27</div></div>

<div class="it" style="top:1479.200px"><svg class="a" style="left:0;top:0" width="139" height="139"><use href="#fes" width="139" height="139"/></svg><div class="t" style="left:148px;top:59px;font-size:13.200px;letter-spacing:1.7px">Fes、Fes、Fes</div><div class="t" style="left:235px;top:111px;font-size:14px;letter-spacing:1px;color:#555">広告</div><svg class="a" style="left:264px;top:116px" width="12" height="12" viewBox="0 0 12 12"><path d="M6 1L11 6C11 8.500 9 11 6 11S1 8.500 1 6z" fill="none" stroke="#555"/><path d="M6 3v7" stroke="#555"/></svg></div>

<div class="it" style="top:1628.100px"><svg class="a p" style="left:0;top:0" width="139" height="139" viewBox="0 0 139 139">
<rect width="139" height="139" fill="#eee"/><rect y="26" width="139" height="87" fill="#8b9a88"/><rect y="26" width="139" height="40" fill="#3f5e38"/>
<g><rect x="24" y="34" width="10" height="30" fill="#4a86a8"/><rect x="46" y="48" width="11" height="22" fill="#d8483e"/><rect x="72" y="36" width="12" height="38" fill="#c9a3a8"/><rect x="94" y="36" width="12" height="40" fill="#e8e8ea"/><rect x="112" y="50" width="20" height="22" fill="#1e2430"/><circle cx="115" cy="44" r="7" fill="#ddd"/><rect x="3" y="40" width="5" height="30" fill="#d33"/><circle cx="30" cy="30" r="5" fill="#c89c80"/><rect x="60" y="52" width="9" height="18" fill="#d8a020"/></g>
<rect y="78" width="139" height="35" fill="#a5aca6"/><path d="M0 100h139v13H0z" fill="#8f9690"/>
</svg><div class="t" style="left:156px;top:59px;font-size:13.200px">手植え、好感触</div><div class="t d" style="left:168px;width:100px;top:121px">05/27</div></div>

<div class="it" style="top:1777px"><div class="b" style="left:0;top:0;width:139px;height:139px;background:#eee"></div><svg class="a p" style="left:0;top:22px" width="139" height="95"><use href="#street" width="139" height="95"/></svg><div class="t" style="left:156px;top:52px;font-size:13.200px;line-height:17.300px;white-space:normal;width:110px">熱いっ！盛岡で<br>33・６度</div><div class="t d" style="left:168px;width:100px;top:121px">05/27</div></div>

<div class="it" style="top:1925.900px"><svg class="a p" style="left:0;top:0" width="139" height="139" viewBox="0 0 139 139">
<rect width="139" height="139" fill="#eee"/><rect y="37" width="139" height="65" fill="#a8aaa4"/><rect y="37" width="139" height="18" fill="#dfe2de"/><rect y="85" width="139" height="17" fill="#8f8c84"/>
<g fill="#23242a"><rect x="0" y="52" width="18" height="48"/><rect x="60" y="50" width="14" height="50"/><rect x="126" y="60" width="13" height="42"/><rect x="88" y="58" width="22" height="22"/></g>
<rect x="30" y="52" width="15" height="46" fill="#2a4a6e"/><rect x="46" y="56" width="10" height="26" fill="#c8c8c8"/><rect x="76" y="56" width="8" height="28" fill="#d6c650"/>
<g fill="#c9a58e"><circle cx="8" cy="48" r="4"/><circle cx="37" cy="46" r="5"/><circle cx="68" cy="45" r="5"/><circle cx="98" cy="52" r="4"/><circle cx="132" cy="52" r="5"/></g>
</svg><div class="t" style="left:156px;top:52px;font-size:13.200px;line-height:17.300px;white-space:normal;width:110px">リトアニアと友好<br>一層</div><div class="t d" style="left:168px;width:100px;top:121px">05/27</div></div>

<!-- mizuno ad -->
<svg class="a" style="left:675px;top:2082px" width="248" height="206" viewBox="0 0 248 206" font-family="'Liberation Sans',sans-serif">
<defs><radialGradient id="gm" cx=".55" cy=".4" r=".8"><stop offset="0" stop-color="#f4f4f4"/><stop offset="1" stop-color="#c8c8c8"/></radialGradient></defs>
<rect x=".5" y=".5" width="247" height="205" fill="url(#gm)" stroke="#333"/>
<text x="19" y="22" font-size="21" font-weight="700" font-style="italic" fill="#1c1414" textLength="118" lengthAdjust="spacingAndGlyphs">ALMIGHTY</text>
<text x="146" y="25" font-size="10" font-weight="700" fill="#222" font-family="'Noto Sans CJK JP',sans-serif" textLength="68">ワークシューズ</text>
<text x="10" y="75" font-size="66" font-weight="700" font-style="italic" fill="#1c1212" textLength="120" lengthAdjust="spacingAndGlyphs" stroke="#1c1212" stroke-width="2.5">TD</text>
<rect x="152" y="28" width="56" height="24" rx="8" fill="#dd0000"/><text x="180" y="46" text-anchor="middle" font-size="16" font-weight="700" fill="#fff">NEW</text>
<path d="M12 100C30 76 70 78 100 86l34-3 34-18 20 2 4 26-14 8 14 8-6 46-22 8-20-2C110 166 40 158 14 128z" fill="#f5f5f5"/>
<path d="M168 65l20 2 4 26-14 8-8-12-22-6-10-6z" fill="#3a3a3a"/><path d="M176 98l14-6 6 12-6 42-20 8-26-8-22-22 14-6z" fill="#b4b4b4"/><path d="M176 95l16-6 2 14-12 4z" fill="#cfdc2f"/>
<path d="M10 104l10-8 8 24 30 20 60 14 46 6 22-4 4 8-26 8-60-4-64-14-24-22z" fill="#222"/><path d="M10 104l10-8 10 30-14 4z" fill="#888"/>
<path d="M100 110l30 6 26-2-20 12 50-6-28 16-18 14 2-18-18-6z" fill="#1a1a1a" stroke="#cfdc2f" stroke-width="1"/>
<path d="M100 88l40-6 18 6" fill="none" stroke="#222" stroke-width="4"/>
<text x="16" y="196" font-size="26" font-weight="700" fill="#161616" textLength="172" lengthAdjust="spacingAndGlyphs">MIZUNO WORKING</text>
<rect x="208" y="165" width="36" height="36" fill="#0a2a96"/><path d="M214 181l24-8-11 8 9 2-12 2-9-2-7 3z" fill="#fff"/><text x="226" y="196" text-anchor="middle" font-size="6" font-style="italic" font-weight="700" fill="#fff">Mizuno</text>
<circle cx="229" cy="7" r="4.5" fill="none" stroke="#2ab4c4" stroke-width="1.2"/><path d="M229 5v4.500" stroke="#2ab4c4"/><path d="M237 3l6 8M243 3l-6 8" stroke="#2ab4c4" stroke-width="1.3"/>
</svg>

<!-- footer -->
<div class="b" style="left:0;top:2614px;width:983px;height:657px;background:#4db6a1"></div>
<div class="t w" style="left:58px;top:2645px;font-size:12px">会社案内</div>
<div class="t w" style="left:136px;top:2645px;font-size:12px">採用情報</div>
<div class="t w" style="left:212px;top:2645px;font-size:12px">投稿規定</div>
<div class="t w" style="left:288px;top:2645px;font-size:12px">広告料金のご案内</div>
<div class="t w" style="left:412px;top:2645px;font-size:12px">各種申請・後援・二次利用</div>
<div class="t w" style="left:584px;top:2645px;font-size:12px">リンクについて</div>
<div class="t w" style="left:696px;top:2645px;font-size:12px">個人情報保護について</div>

<div class="h" style="left:54px">紙面、取材</div>
<div class="h" style="left:229px">著作権</div>
<div class="h" style="left:405px">新聞購読・配達</div>
<div class="h" style="left:580px">広告事業</div>
<div class="h" style="left:755px">ホームページ</div>

<!-- col1 -->
<div class="t f" style="left:54px;top:2715px">ＮＩＥ・読者部</div>
<svg class="a" style="left:54px;top:2737px" width="28" height="27" viewBox="0 0 28 27"><path d="M22 0c4 1 5 3 5 6-1 10-9 19-19 21-4 0-7-2-8-6l8-5 3 4c4-2 7-7 8-12l-4-3z" fill="#fff"/></svg>
<div class="t n" style="left:85px;top:2741px">019-654-1208</div>
<div class="t f" style="left:54px;top:2764px">(平日 9:00 - 17:00)</div>
<div class="t e" style="left:54px;top:2785px">dokusya@iwate-np.co.jp</div>
<svg class="a" style="left:54px;top:2807px" width="26" height="19" viewBox="0 0 26 19"><rect width="26" height="19" rx="1.5" fill="#fff"/><rect x="3" y="3" width="20" height="13" fill="none" stroke="#4db6a1" stroke-width="1.4"/><path d="M3 3l10 8 10-8" fill="none" stroke="#4db6a1" stroke-width="1.6"/></svg>

<!-- col2 -->
<div class="t f" style="left:229px;top:2715px">総合メディア局</div>
<div class="t f" style="left:229px;top:2732px">コンテンツ事業部</div>
<div class="t e" style="left:229px;top:2753px">chosakuken@iwate-np.co.jp</div>
<svg class="a" style="left:229px;top:2774px" width="26" height="20" viewBox="0 0 26 19"><rect width="26" height="19" rx="1.5" fill="#fff"/><rect x="3" y="3" width="20" height="13" fill="none" stroke="#4db6a1" stroke-width="1.4"/><path d="M3 3l10 8 10-8" fill="none" stroke="#4db6a1" stroke-width="1.6"/></svg>
<div class="t y" style="left:230px;top:2800px">&gt;記事・写真等の二次利用</div>

<!-- col3 -->
<div class="t f" style="left:404px;top:2715px">販売局販売部</div>
<svg class="a" style="left:404px;top:2737px" width="28" height="27" viewBox="0 0 28 27"><path d="M22 0c4 1 5 3 5 6-1 10-9 19-19 21-4 0-7-2-8-6l8-5 3 4c4-2 7-7 8-12l-4-3z" fill="#fff"/></svg>
<div class="t n" style="left:436px;top:2741px;transform:scaleX(.74)">0120-240-840</div>
<div class="t f" style="left:404px;top:2764px">(平日 9:00 - 17:00)</div>
<div class="t e" style="left:404px;top:2785px">hanbai@iwate-np.co.jp</div>
<svg class="a" style="left:404px;top:2807px" width="26" height="19" viewBox="0 0 26 19"><rect width="26" height="19" rx="1.5" fill="#fff"/><rect x="3" y="3" width="20" height="13" fill="none" stroke="#4db6a1" stroke-width="1.4"/><path d="M3 3l10 8 10-8" fill="none" stroke="#4db6a1" stroke-width="1.6"/></svg>

<!-- col4 -->
<div class="t f" style="left:580px;top:2715px">広告の問い合わせ</div>
<div class="t f" style="left:580px;top:2732px">広告事業局広告部</div>
<svg class="a" style="left:580px;top:2754px" width="28" height="27" viewBox="0 0 28 27"><path d="M22 0c4 1 5 3 5 6-1 10-9 19-19 21-4 0-7-2-8-6l8-5 3 4c4-2 7-7 8-12l-4-3z" fill="#fff"/></svg>
<div class="t n" style="left:612px;top:2758px;transform:scaleX(.66)">019-653-4118</div>
<div class="t f" style="left:580px;top:2781px">(平日 9:00 - 17:00)</div>
<div class="b" style="left:580px;top:2808px;width:157px;height:1px;background:#66c3af"></div>
<div class="t f" style="left:580px;top:2815px">事業の問い合わせ</div>
<div class="t f" style="left:580px;top:2832px">広告事業局事業部</div>
<div class="t e" style="left:580px;top:2853px">jigyoubu@iwate-np.co.jp</div>
<svg class="a" style="left:580px;top:2874px" width="26" height="20" viewBox="0 0 26 19"><rect width="26" height="19" rx="1.5" fill="#fff"/><rect x="3" y="3" width="20" height="13" fill="none" stroke="#4db6a1" stroke-width="1.4"/><path d="M3 3l10 8 10-8" fill="none" stroke="#4db6a1" stroke-width="1.6"/></svg>
<div class="t y" style="left:581px;top:2900px">&gt;後援申請書</div>

<!-- col5 -->
<div class="t f" style="left:755px;top:2715px">総合メディア局</div>
<div class="t f" style="left:755px;top:2732px">デジタル戦略部</div>
<div class="t e" style="left:755px;top:2753px">center@iwate-np.co.jp</div>
<svg class="a" style="left:755px;top:2774px" width="26" height="20" viewBox="0 0 26 19"><rect width="26" height="19" rx="1.5" fill="#fff"/><rect x="3" y="3" width="20" height="13" fill="none" stroke="#4db6a1" stroke-width="1.4"/><path d="M3 3l10 8 10-8" fill="none" stroke="#4db6a1" stroke-width="1.6"/></svg>

<div class="t w" style="left:0;width:983px;text-align:center;top:2993px;font-size:26px">47NEWS 参加社</div>
<div class="l" style="top:3027px">北海道新聞 | 室蘭民報 | 河北新報 | 東奥日報 | デーリー東北 | 秋田魁新報 | 山形新聞 | 福島民報 | 福島民友新聞 | 産業経済新聞 | 日本経済新聞 | ジャパンタイムズ |</div>
<div class="l" style="top:3044px">下野新聞 | 茨城新聞 | 上毛新聞 | 千葉日報 | 神奈川新聞 | 埼玉新聞 | 山梨日日新聞 | 信濃毎日新聞 | 新潟日報 | 中日新聞 | 中部経済新聞 | 伊勢新聞 | 静岡新聞 | 岐阜新聞 |</div>
<div class="l" style="top:3061px">北日本新聞 | 北國新聞 | 福井新聞 | 京都新聞 | 神戸新聞 | 奈良新聞 | 紀伊民報 | 山陽新聞 | 中国新聞 | 日本海新聞 | 山口新聞 | 山陰中央新報 | 四国新聞 | 愛媛新聞 |</div>
<div class="l" style="top:3078px">徳島新聞 | 高知新聞 | 西日本新聞 | 大分合同新聞 | 宮崎日日新聞 | 長崎新聞 | 佐賀新聞 | 熊本日日新聞 | 南日本新聞 | 沖縄タイムス | 琉球新報 | 共同通信</div>
<div class="b" style="left:45px;top:3143px;width:893px;height:1px;background:#65c4b0"></div>
<div class="t w" style="left:0;width:983px;text-align:center;top:3178px;font-size:25px;font-weight:700;letter-spacing:14px;line-height:26px">岩手日報</div>
<div class="t w" style="left:0;width:983px;text-align:center;top:3203px;font-size:11.500px">本ページ掲載内容の無断転載を禁じます。すべての著作権は岩手日報社に属します。</div>
<div class="t" style="left:0;width:983px;text-align:center;top:3221px;font-size:13px;color:#8fd4c6">Copyright©2019, IWATE NIPPO CO.,LTD. All rights reserved.</div>
</body></html>
